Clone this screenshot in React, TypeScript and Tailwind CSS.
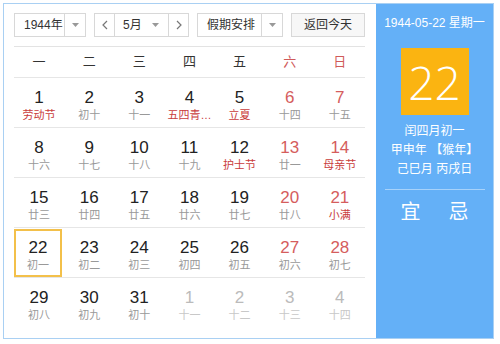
import React from 'react';

type Day = { d: number; l: string; fest?: boolean; other?: boolean };

const rows: Day[][] = [
  [
    { d: 1, l: '劳动节', fest: true },
    { d: 2, l: '初十' },
    { d: 3, l: '十一' },
    { d: 4, l: '五四青…', fest: true },
    { d: 5, l: '立夏', fest: true },
    { d: 6, l: '十四' },
    { d: 7, l: '十五' },
  ],
  [
    { d: 8, l: '十六' },
    { d: 9, l: '十七' },
    { d: 10, l: '十八' },
    { d: 11, l: '十九' },
    { d: 12, l: '护士节', fest: true },
    { d: 13, l: '廿一' },
    { d: 14, l: '母亲节', fest: true },
  ],
  [
    { d: 15, l: '廿三' },
    { d: 16, l: '廿四' },
    { d: 17, l: '廿五' },
    { d: 18, l: '廿六' },
    { d: 19, l: '廿七' },
    { d: 20, l: '廿八' },
    { d: 21, l: '小满', fest: true },
  ],
  [
    { d: 22, l: '初一' },
    { d: 23, l: '初二' },
    { d: 24, l: '初三' },
    { d: 25, l: '初四' },
    { d: 26, l: '初五' },
    { d: 27, l: '初六' },
    { d: 28, l: '初七' },
  ],
  [
    { d: 29, l: '初八' },
    { d: 30, l: '初九' },
    { d: 31, l: '初十' },
    { d: 1, l: '十一', other: true },
    { d: 2, l: '十二', other: true },
    { d: 3, l: '十三', other: true },
    { d: 4, l: '十四', other: true },
  ],
];

const weekdays = ['一', '二', '三', '四', '五', '六', '日'];

const Caret = () => (
  <svg width="7" height="4" viewBox="0 0 7 4" className="text-[#999]">
    <path d="M0 0h7L3.5 4z" fill="currentColor" />
  </svg>
);

const App: React.FC = () => {
  return (
    <div
      className="w-[500px] h-[344px] bg-white pl-[3px] pt-[3px]"
      style={{ fontFamily: '"Liberation Sans", "Noto Sans CJK SC", sans-serif' }}
    >
      <div className="flex w-[491px] h-[336px] border border-[#a9d0f3]">
        {/* Left: calendar */}
        <div className="w-[372px] pl-[10px] pt-[9px]">
          {/* Controls */}
          <div className="flex gap-2 h-[24px] text-[12px] text-[#333]">
            <div className="flex w-[72px] border border-[#d8d8d8]">
              <div className="flex-1 flex items-center pl-[9px]">1944年</div>
              <div className="w-[21px] border-l border-[#d8d8d8] flex items-center justify-center">
                <Caret />
              </div>
            </div>
            <div className="flex w-[95px] border border-[#d8d8d8]">
              <div className="w-[20px] border-r border-[#d8d8d8] flex items-center justify-center text-[#777]">
                <svg width="6" height="10" viewBox="0 0 6 10">
                  <path d="M5 1L1 5l4 4" stroke="currentColor" fill="none" strokeWidth="1.2" />
                </svg>
              </div>
              <div className="flex-1 flex items-center justify-between pl-[8px] pr-[9px]">
                <span>5月</span>
                <Caret />
              </div>
              <div className="w-[20px] border-l border-[#d8d8d8] flex items-center justify-center text-[#777]">
                <svg width="6" height="10" viewBox="0 0 6 10">
                  <path d="M1 1l4 4-4 4" stroke="currentColor" fill="none" strokeWidth="1.2" />
                </svg>
              </div>
            </div>
            <div className="flex w-[86px] border border-[#d8d8d8]">
              <div className="flex-1 flex items-center pl-[9px]">假期安排</div>
              <div className="w-[21px] border-l border-[#d8d8d8] flex items-center justify-center">
                <Caret />
              </div>
            </div>
            <div className="w-[74px] border border-[#d8d8d8] bg-[#f7f7f7] flex items-center justify-center">
              返回今天
            </div>
          </div>

          {/* Weekday header */}
          <div className="mt-[9px] w-[351px] border-t border-[#e3e3e3] grid grid-cols-7 h-[31px] text-[13px]">
            {weekdays.map((w, i) => (
              <div
                key={w}
                className={`w-[50px] flex items-center justify-center ${i >= 5 ? 'text-[#d05a5a]' : 'text-[#333]'}`}
              >
                {w}
              </div>
            ))}
          </div>

          {/* Days */}
          {rows.map((row, r) => (
            <div key={r} className="w-[351px] border-t border-[#e6e6e6] grid grid-cols-7 h-[50px]">
              {row.map((c, i) => {
                const selected = r === 3 && i === 0;
                const weekend = i >= 5;
                const numColor = c.other ? 'text-[#bbb]' : weekend ? 'text-[#d55d5d]' : 'text-[#222]';
                const lunColor = c.other
                  ? 'text-[#c8c8c8]'
                  : c.fest
                  ? 'text-[#c93c3c]'
                  : 'text-[#999]';
                return (
                  <div key={i} className="w-[50px] h-[50px]">
                    <div
                      className={
                        selected
                          ? 'mt-[1px] w-[48px] h-[48px] border-2 border-[#f3c04a] flex flex-col items-center pt-[7px]'
                          : 'w-[50px] h-[50px] flex flex-col items-center pt-[10px]'
                      }
                    >
                      <span className={`text-[17px] leading-[20px] ${numColor}`}>{c.d}</span>
                      <span className={`text-[11px] leading-[15px] whitespace-nowrap ${lunColor}`}>{c.l}</span>
                    </div>
                  </div>
                );
              })}
            </div>
          ))}
        </div>

        {/* Right: info panel */}
        <div className="flex-1 bg-[#64b0f7] flex flex-col items-center text-white">
          <div className="mt-[10px] text-[12px] leading-[18px]">1944-05-22 星期一</div>
          <div className="mt-[16px] w-[68px] h-[67px] bg-[#fbb411] flex items-center justify-center">
            <span
              className="text-[46px] font-light leading-none"
              style={{ fontFamily: '"Open Sans", "Liberation Sans", sans-serif' }}
            >
              22
            </span>
          </div>
          <div className="mt-[7px] text-[12px] leading-[19px] text-center">
            <div>闰四月初一</div>
            <div>甲申年 【猴年】</div>
            <div>己巳月 丙戌日</div>
          </div>
          <div className="mt-[10px] w-[100px] border-t border-[#a7d2fa]" />
          <div className="mt-[8px] flex gap-[28px] text-[20px] leading-[28px]">
            <span>宜</span>
            <span>忌</span>
          </div>
        </div>
      </div>
    </div>
  );
};

export default App;
